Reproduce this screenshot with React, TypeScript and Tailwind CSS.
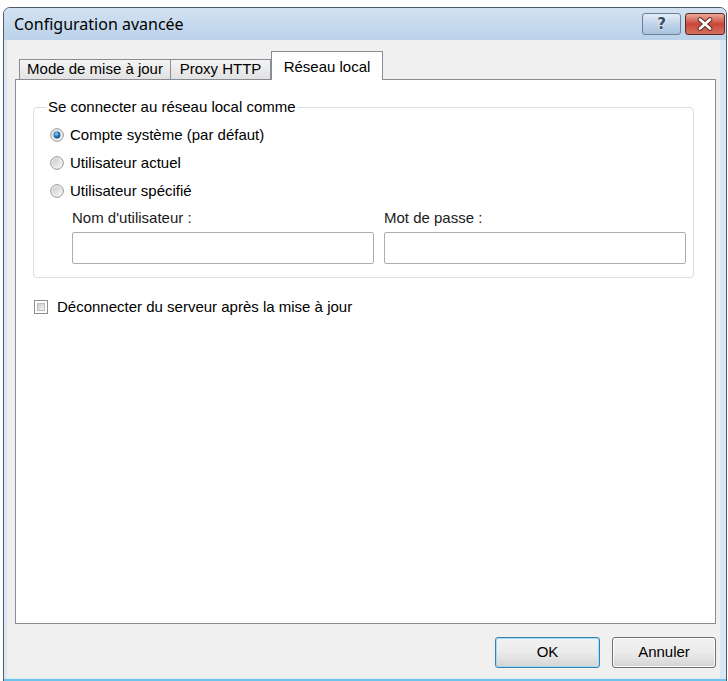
import React from "react";

const body = { fontFamily: '"Liberation Sans", Arial, sans-serif' };
const title = { fontFamily: '"Noto Sans", "Open Sans", sans-serif' };

function Radio({ checked }: { checked?: boolean }) {
  return (
    <svg width="14" height="14" viewBox="0 0 14 14" className="shrink-0">
      <defs>
        <linearGradient id={checked ? "rg1" : "rg0"} x1="0" y1="0" x2="1" y2="1">
          <stop offset="0" stopColor="#c9c9c9" />
          <stop offset="1" stopColor="#f7f7f7" />
        </linearGradient>
        <radialGradient id="dot" cx="0.4" cy="0.35" r="0.7">
          <stop offset="0" stopColor="#9fd4f7" />
          <stop offset="0.5" stopColor="#2a7fc4" />
          <stop offset="1" stopColor="#0e3f73" />
        </radialGradient>
      </defs>
      <circle cx="7" cy="7" r="6.3" fill="#f4f4f4" stroke="#8f9194" strokeWidth="1" />
      <circle cx="7" cy="7" r="4.8" fill={`url(#${checked ? "rg1" : "rg0"})`} />
      {checked && <circle cx="7" cy="7" r="3.4" fill="url(#dot)" />}
    </svg>
  );
}

function Checkbox() {
  return (
    <div className="w-[14px] h-[14px] border border-[#8f8f8f] bg-white p-[2px] shrink-0">
      <div className="w-full h-full bg-gradient-to-br from-[#cbcbcb] to-[#f6f6f6] border border-[#bdbdbd]" />
    </div>
  );
}

export default function App() {
  return (
    <div className="w-[728px] h-[681px] bg-white overflow-hidden" style={body}>
      <div className="ml-[3px] mt-[7px] w-[724px] h-[680px] border border-[#4e5b6a] rounded-t-[7px] bg-[#dbe7f4] flex flex-col">
        {/* Title bar */}
        <div className="h-[32px] rounded-t-[6px] bg-gradient-to-b from-[#d3e2f1] to-[#bad2ea] flex items-start">
          <div className="pl-[10px] pt-[5px] text-[16px] leading-[22px] text-black" style={title}>
            Configuration avancée
          </div>
          <div className="ml-auto flex gap-[4px] pt-[5px] pr-[1px]">
            <div className="w-[39px] h-[22px] rounded-[3px] border border-[#6c7f97] bg-gradient-to-b from-[#e2ecf7] via-[#c1d5ea] to-[#a9c3de] flex items-center justify-center">
              <span
                className="text-[15px] font-bold leading-none text-[#354a63]"
                style={{ fontFamily: '"DejaVu Sans", sans-serif', textShadow: "0 0 2px #fff, 0 0 1px #fff" }}
              >
                ?
              </span>
            </div>
            <div className="w-[40px] h-[22px] rounded-[3px] border border-[#5b2a25] bg-gradient-to-b from-[#e9a99b] via-[#c9463a] to-[#d4705f] flex items-center justify-center">
              <svg width="18" height="14" viewBox="0 0 18 14">
                <path d="M4 2.5 L14 11.5 M14 2.5 L4 11.5" stroke="#5a2420" strokeWidth="4.6" strokeLinecap="round" />
                <path d="M4 2.5 L14 11.5 M14 2.5 L4 11.5" stroke="#ffffff" strokeWidth="2.8" strokeLinecap="round" />
              </svg>
            </div>
          </div>
        </div>
        {/* Client */}
        <div className="ml-[3px] w-[713px] h-[638px] bg-[#f0f0f0] flex flex-col">
          {/* Tabs */}
          <div className="h-[39px] flex items-end pl-[12px] pt-[11px]">
            <div className="w-[152px] h-[20px] border border-b-0 border-[#898c95] bg-gradient-to-b from-[#f4f4f4] to-[#e2e2e2] flex items-center justify-center text-[15px] text-black">
              Mode de mise à jour
            </div>
            <div className="-ml-px w-[101px] h-[20px] border border-b-0 border-[#898c95] bg-gradient-to-b from-[#f4f4f4] to-[#e2e2e2] flex items-center justify-center text-[15px] text-black">
              Proxy HTTP
            </div>
            <div className="relative z-10 -mb-px w-[112px] h-[29px] border border-b-0 border-[#898c95] bg-white flex items-start justify-center pt-[4px] text-[15px] text-black">
              Réseau local
            </div>
          </div>
          {/* Panel */}
          <div className="ml-[8px] w-[701px] h-[545px] border border-[#898c95] bg-white flex flex-col">
            <div className="relative ml-[17px] mt-[27px] w-[661px] border border-[#d5dfe5] rounded-[4px] pt-[13px] pb-[13px]">
              <div className="absolute -top-[10px] left-[12px] bg-white px-[2px] text-[15px] leading-[18px] text-black">
                Se connecter au réseau local comme
              </div>
              <div className="h-[28px] flex items-center pl-[16px] gap-[6px] text-[15px] text-black">
                <Radio checked />
                <span>Compte système (par défaut)</span>
              </div>
              <div className="h-[28px] flex items-center pl-[16px] gap-[6px] text-[15px] text-black">
                <Radio />
                <span>Utilisateur actuel</span>
              </div>
              <div className="h-[28px] flex items-center pl-[16px] gap-[6px] text-[15px] text-black">
                <Radio />
                <span>Utilisateur spécifié</span>
              </div>
              <div className="pl-[38px] flex gap-[10px] mt-[5px]">
                <div className="flex flex-col">
                  <div className="h-[16px] leading-[16px] text-[15px] text-[#1a1a1a]">Nom d'utilisateur :</div>
                  <div className="mt-[6px] w-[302px] h-[32px] border border-[#abadb3] rounded-[2px] bg-white" />
                </div>
                <div className="flex flex-col">
                  <div className="h-[16px] leading-[16px] text-[15px] text-[#1a1a1a]">Mot de passe :</div>
                  <div className="mt-[6px] w-[302px] h-[32px] border border-[#abadb3] rounded-[2px] bg-white" />
                </div>
              </div>
            </div>
            <div className="ml-[18px] mt-[18px] flex items-center gap-[9px] text-[15px] text-black">
              <Checkbox />
              <span>Déconnecter du serveur après la mise à jour</span>
            </div>
          </div>
          {/* Buttons */}
          <div className="flex justify-end gap-[12px] pr-[4px] mt-[13px]">
            <div className="w-[105px] h-[31px] rounded-[3px] border border-[#3c7fb1] bg-gradient-to-b from-[#f2f2f2] via-[#ebebeb] to-[#d4d4d4] shadow-[inset_0_0_0_1px_#9edcf7] flex items-center justify-center text-[15px] text-black">
              OK
            </div>
            <div className="w-[104px] h-[31px] rounded-[3px] border border-[#707070] bg-gradient-to-b from-[#f2f2f2] via-[#ebebeb] to-[#d4d4d4] shadow-[inset_0_0_0_1px_#fcfcfc] flex items-center justify-center text-[15px] text-black">
              Annuler
            </div>
          </div>
        </div>
        <div className="h-[1px] bg-[#dbe7f4]" />
        <div className="h-[3px] bg-[#6cc4ec]" />
      </div>
    </div>
  );
}
